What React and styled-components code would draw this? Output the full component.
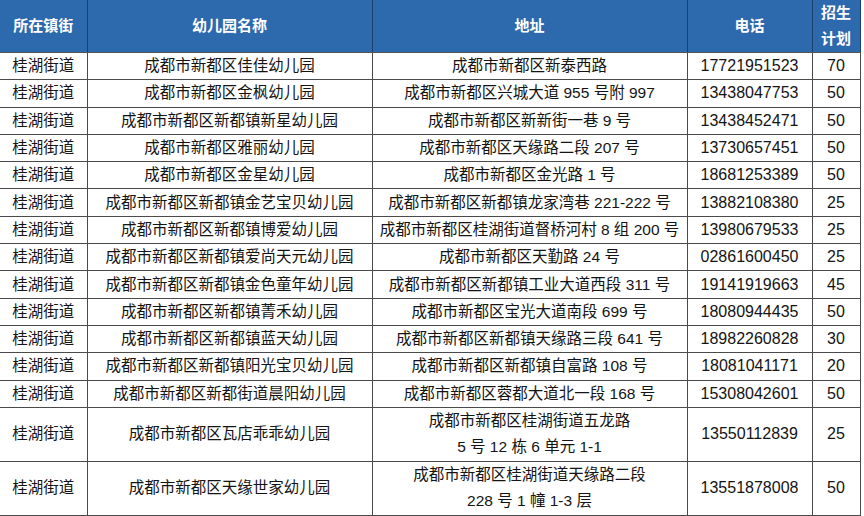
import React from "react";
import styled, { createGlobalStyle } from "styled-components";

const Global = createGlobalStyle`
  html, body { margin: 0; padding: 0; background: #fff; }
  body { font-family: "Liberation Sans", "Noto Sans CJK SC", sans-serif; }
`;

const Table = styled.table`
  width: 860px;
  border-collapse: collapse;
  table-layout: fixed;
  font-size: 15.5px;
  color: #141414;
`;

const HeadCell = styled.th`
  background: #2d69ad;
  color: #fff;
  font-weight: 700;
  font-size: 15px;
  line-height: 26px;
  height: 52px;
  padding: 0;
  text-align: center;
  border-left: 1px solid #1b3f6c;
  border-right: 1px solid #1b3f6c;
  border-bottom: 1px solid #555;
  &:first-child { border-left: none; }
`;

const Row = styled.tr`
  height: ${(p) => (p.$double ? "54px" : "27.3px")};
`;

const Cell = styled.td`
  padding: 0;
  text-align: center;
  vertical-align: middle;
  line-height: 20px;
  font-size: ${(p) => (p.$num ? "16px" : "inherit")};
  border: 1px solid #4a4a4a;
  white-space: nowrap;
  &:first-child { border-left: none; }
`;

const Line = styled.div`
  line-height: 26px;
`;

const cols = [87, 285, 315, 125, 48];

const rows = [
  ["成都市新都区佳佳幼儿园", ["成都市新都区新泰西路"], "17721951523", "70"],
  ["成都市新都区金枫幼儿园", ["成都市新都区兴城大道 955 号附 997"], "13438047753", "50"],
  ["成都市新都区新都镇新星幼儿园", ["成都市新都区新新街一巷 9 号"], "13438452471", "50"],
  ["成都市新都区雅丽幼儿园", ["成都市新都区天缘路二段 207 号"], "13730657451", "50"],
  ["成都市新都区金星幼儿园", ["成都市新都区金光路 1 号"], "18681253389", "50"],
  ["成都市新都区新都镇金艺宝贝幼儿园", ["成都市新都区新都镇龙家湾巷 221-222 号"], "13882108380", "25"],
  ["成都市新都区新都镇博爱幼儿园", ["成都市新都区桂湖街道督桥河村 8 组 200 号"], "13980679533", "25"],
  ["成都市新都区新都镇爱尚天元幼儿园", ["成都市新都区天勤路 24 号"], "02861600450", "25"],
  ["成都市新都区新都镇金色童年幼儿园", ["成都市新都区新都镇工业大道西段 311 号"], "19141919663", "45"],
  ["成都市新都区新都镇菁禾幼儿园", ["成都市新都区宝光大道南段 699 号"], "18080944435", "50"],
  ["成都市新都区新都镇蓝天幼儿园", ["成都市新都区新都镇天缘路三段 641 号"], "18982260828", "30"],
  ["成都市新都区新都镇阳光宝贝幼儿园", ["成都市新都区新都镇自富路 108 号"], "18081041171", "20"],
  ["成都市新都区新都街道晨阳幼儿园", ["成都市新都区蓉都大道北一段 168 号"], "15308042601", "50"],
  ["成都市新都区瓦店乖乖幼儿园", ["成都市新都区桂湖街道五龙路", "5 号 12 栋 6 单元 1-1"], "13550112839", "25"],
  ["成都市新都区天缘世家幼儿园", ["成都市新都区桂湖街道天缘路二段", "228 号 1 幢 1-3 层"], "13551878008", "50"],
];

export default function App() {
  return (
    <>
      <Global />
      <Table>
        <colgroup>
          {cols.map((w, i) => (
            <col key={i} style={{ width: w }} />
          ))}
        </colgroup>
        <thead>
          <tr>
            <HeadCell>所在镇街</HeadCell>
            <HeadCell>幼儿园名称</HeadCell>
            <HeadCell>地址</HeadCell>
            <HeadCell>电话</HeadCell>
            <HeadCell>
              招生
              <br />
              计划
            </HeadCell>
          </tr>
        </thead>
        <tbody>
          {rows.map(([name, addr, tel, plan], i) => (
            <Row key={i} $double={addr.length > 1}>
              <Cell>桂湖街道</Cell>
              <Cell>{name}</Cell>
              <Cell>
                {addr.map((a, j) => (
                  <Line key={j}>{a}</Line>
                ))}
              </Cell>
              <Cell $num>{tel}</Cell>
              <Cell $num>{plan}</Cell>
            </Row>
          ))}
        </tbody>
      </Table>
    </>
  );
}
